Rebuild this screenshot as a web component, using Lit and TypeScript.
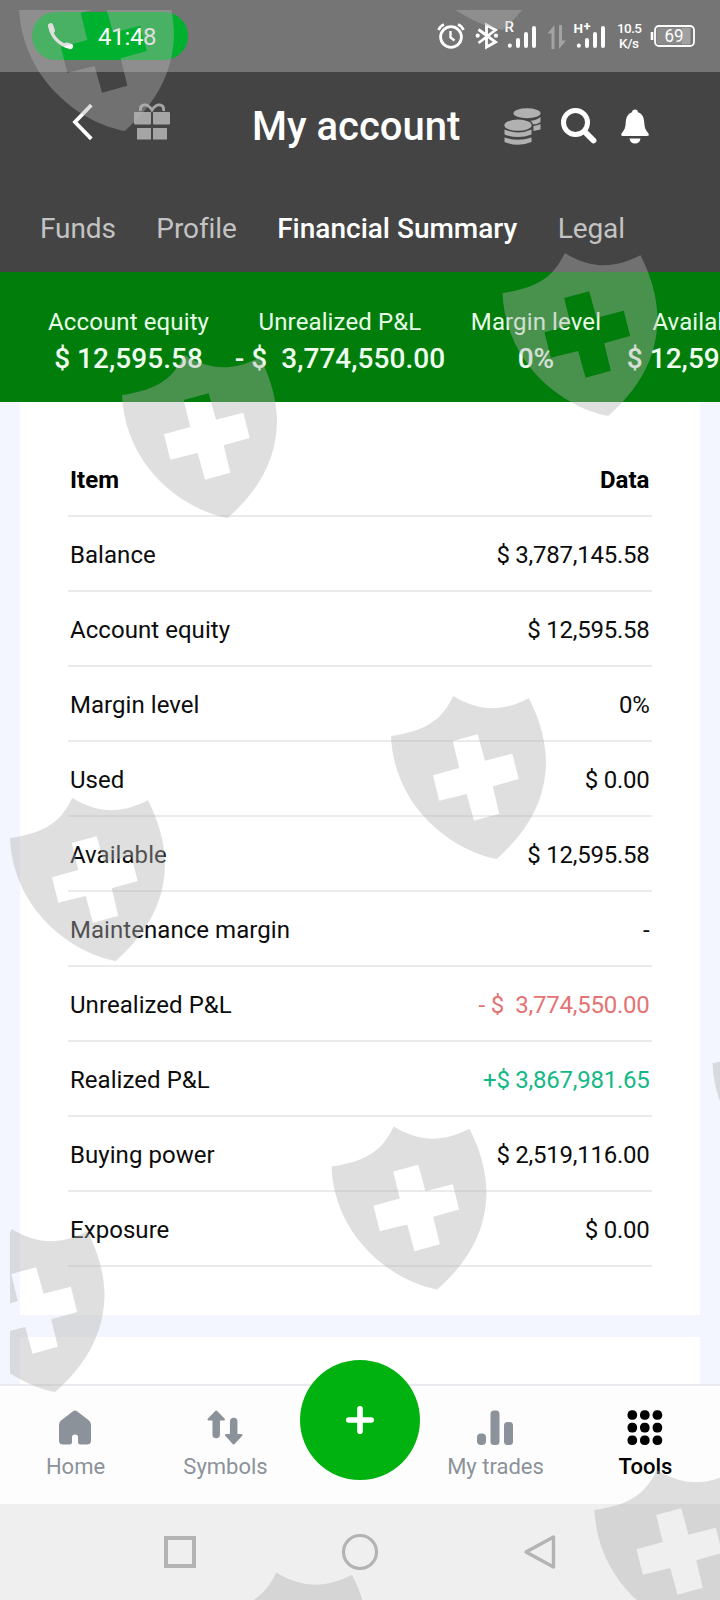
import { LitElement, html, css, svg } from 'lit';
import { customElement, property } from 'lit/decorators.js';
import { classMap } from 'lit/directives/class-map.js';

const TABS = ['Funds', 'Profile', 'Financial Summary', 'Legal'];

const STATS = [
  { label: 'Account equity', value: '$ 12,595.58' },
  { label: 'Unrealized P&L', value: '- $  3,774,550.00' },
  { label: 'Margin level', value: '0%' },
  { label: 'Available', value: '$ 12,595.58' },
];

const ROWS = [
  { item: 'Balance', data: '$ 3,787,145.58', tone: '' },
  { item: 'Account equity', data: '$ 12,595.58', tone: '' },
  { item: 'Margin level', data: '0%', tone: '' },
  { item: 'Used', data: '$ 0.00', tone: '' },
  { item: 'Available', data: '$ 12,595.58', tone: '' },
  { item: 'Maintenance margin', data: '-', tone: '' },
  { item: 'Unrealized P&L', data: '- $  3,774,550.00', tone: 'loss' },
  { item: 'Realized P&L', data: '+$ 3,867,981.65', tone: 'gain' },
  { item: 'Buying power', data: '$ 2,519,116.00', tone: '' },
  { item: 'Exposure', data: '$ 0.00', tone: '' },
];

// top left corner of every shield in the overlay
const SHIELDS = [
  [18, -33],
  [396, -134],
  [121, 354],
  [501.5, 252],
  [390, 695],
  [9, 797],
  [711.5, 1022],
  [330.5, 1125.5],
  [-51.5, 1228],
  [593.5, 1469],
  [213, 1571.5],
];

@customElement('status-bar')
class StatusBar extends LitElement {
  static styles = css`
    :host {
      display: flex;
      align-items: center;
      justify-content: space-between;
      height: 72px;
      padding: 0 24px 0 32px;
      box-sizing: border-box;
      background: #757575;
      color: #fff;
    }

    .call {
      display: flex;
      align-items: center;
      gap: 24px;
      width: 156px;
      height: 48px;
      padding-left: 15px;
      box-sizing: border-box;
      border-radius: 24px;
      background: #00b12f;
      font-size: 24px;
      letter-spacing: -0.3px;
    }

    .call span {
      padding-top: 2px;
    }

    svg {
      display: block;
    }
  `;

  render() {
    return html`
      <div class="call">
        <svg width="27" height="27" viewBox="0 0 27 27" fill="none" stroke="#fff" stroke-linecap="round">
          <path d="M3.5 4C4 13 13 23 23 23.5" stroke-width="3.4" />
          <path d="M3.6 2.8L5.2 7.6" stroke-width="5.4" />
          <path d="M19.4 22.2L23.4 23.4" stroke-width="5.4" />
        </svg>
        <span>41:48</span>
      </div>
      <svg width="260" height="40" viewBox="436 16 260 40" fill="none" stroke="#fff" font-family="Roboto, sans-serif">
        <circle cx="451" cy="37" r="10.4" stroke-width="2.8" />
        <path d="M450.5 31v6.5l4 3" stroke-width="2.4" />
        <path d="M438.5 30q1.5-4 5.5-5.5M463.5 30q-1.5-4-5.5-5.5" stroke-width="2.6" />
        <path d="M478.5 29.5l17 12.5-9 5v-22l9 5-17 13" stroke-width="2.8" />
        <circle cx="477.7" cy="35.7" r="2.1" fill="#fff" stroke="none" />
        <circle cx="496" cy="35.7" r="2.1" fill="#fff" stroke="none" />
        <g stroke-width="4" stroke-linecap="round">
          <path d="M509.8 45.5v.3M518 40v6M526 34v12M534 28v18" />
          <path d="M578.8 45.5v.3M587 40v6M595 34v12M603 28v18" />
        </g>
        <g fill="#a3a3a3" stroke="none">
          <path d="M547.5 33.5l7-8.5v24h-3V33.5z" />
          <path d="M559 25v24l7-8.5h-4V25z" />
        </g>
        <g fill="#fff" stroke="none" font-weight="500">
          <text x="504.5" y="32" font-size="15">R</text>
          <text x="573.5" y="33" font-size="13.5" font-weight="700">H</text>
          <text x="583.5" y="31" font-size="13" font-weight="700">+</text>
          <text x="617" y="33" font-size="13.5" textLength="25">10.5</text>
          <text x="619" y="48" font-size="13.5" textLength="20">K/s</text>
        </g>
        <rect x="655" y="26" width="39" height="20" rx="4" stroke-width="1.8" />
        <rect x="656.5" y="27.5" width="26" height="17" rx="2" fill="#8b8b8b" stroke="none" />
        <rect x="682" y="27.5" width="8.5" height="17" fill="#a0a0a0" stroke="none" />
        <path d="M652 32v8" stroke-width="2.6" />
        <text x="664.5" y="42" font-size="18" fill="#fff" stroke="none" textLength="19" lengthAdjust="spacingAndGlyphs">69</text>
      </svg>
    `;
  }
}

@customElement('app-header')
class AppHeader extends LitElement {
  static styles = css`
    :host {
      display: flex;
      flex-direction: column;
      height: 199.5px;
      background: #444;
      color: #fff;
    }

    .bar {
      display: flex;
      align-items: center;
      height: 108px;
      padding: 0 72px;
    }

    .left {
      display: flex;
      gap: 40px;
      width: 180px;
      padding-bottom: 8px;
    }

    .title {
      flex: 1;
      font-size: 40px;
      font-weight: 500;
      white-space: nowrap;
    }

    .right {
      display: flex;
      align-items: center;
      gap: 20px;
      width: 144px;
    }

    .tabs {
      display: flex;
      gap: 40.5px;
      padding: 32px 0 0 40px;
      font-size: 28px;
      line-height: 34px;
      letter-spacing: -0.1px;
      color: #c3c3c3;
      white-space: nowrap;
    }

    .active {
      color: #fff;
      font-weight: 500;
      letter-spacing: 0;
    }

    svg {
      display: block;
      flex: none;
    }
  `;

  render() {
    return html`
      <div class="bar">
        <div class="left">
          <svg width="21" height="38" viewBox="0 0 21 38" fill="none" stroke="#fff" stroke-width="3.8">
            <path d="M18 3.5L3 19l15 15.5" stroke-linecap="square" />
          </svg>
          <svg width="38" height="38" viewBox="0 0 38 38" fill="#a5a5a5">
            <rect x="1" y="9" width="17" height="12.5" rx="1" />
            <rect x="20" y="9" width="17" height="12.5" rx="1" />
            <rect x="4" y="25" width="14" height="11.5" />
            <rect x="20" y="25" width="14" height="11.5" />
            <path
              d="M7.5 8C6.5 1 14 -1 19 7C24 -1 31.5 1 30.5 8"
              fill="none"
              stroke="#a5a5a5"
              stroke-width="2.8"
            />
          </svg>
        </div>
        <div class="title">My account</div>
        <div class="right">
          <svg width="37" height="37" viewBox="0 0 37 37" fill="#b1b1b1">
            <ellipse cx="23" cy="5.3" rx="13.5" ry="5" />
            <path d="M36.5 9v5q-3 2.5-8.500 2.5l-2.500-3.5q7-.5 11-4z" />
            <path d="M36.5 16v5.5l-7 1.500v-5q4-.3 7-2z" />
            <ellipse cx="14" cy="17" rx="15" ry="7" fill="#444" />
            <ellipse cx="14" cy="17.2" rx="13.6" ry="5.6" />
            <path d="M.5 21.5q13.500 6 27 0v5q-13.500 5-27 0z" />
            <path d="M.5 29.5q13.500 4.500 27 0v4.500q-13.500 5.500-27 0z" />
          </svg>
          <svg width="36" height="36" viewBox="0 0 36 36" fill="none" stroke="#fff">
            <circle cx="14.5" cy="14.5" r="12" stroke-width="5" />
            <path d="M23.5 23.5l9 9" stroke-width="5.8" stroke-linecap="round" />
          </svg>
          <svg width="36" height="36" viewBox="0 0 36 36" fill="#fff">
            <path
              d="M18 1.5C19.8 1.5 20.8 2.5 21 4.3C26 6 27 10.5 27.3 15C27.5 19.5 28.5 22 31.5 25.5Q32.5 28 30 28H6Q3.5 28 4.5 25.5C7.5 22 8.5 19.5 8.7 15C9 10.5 10 6 15 4.3C15.2 2.5 16.2 1.5 18 1.5z"
            />
            <path d="M12.5 30.5h11q-.8 5-5.5 5t-5.500-5z" />
          </svg>
        </div>
      </div>
      <div class="tabs">
        ${TABS.map((t) => html`<span class=${classMap({ active: t === 'Financial Summary' })}>${t}</span>`)}
      </div>
    `;
  }
}

@customElement('stats-strip')
class StatsStrip extends LitElement {
  static styles = css`
    :host {
      display: flex;
      gap: 25.6px;
      height: 130.5px;
      padding: 36.5px 0 0 48px;
      box-sizing: border-box;
      overflow: hidden;
      background: #007d0a;
      color: #fff;
      text-align: center;
      white-space: pre;
    }

    .stat {
      flex: none;
    }

    .label {
      font-size: 24px;
      line-height: 28px;
      letter-spacing: 0.12px;
      color: #e8ffe8;
    }

    .value {
      font-size: 28px;
      line-height: 46px;
      font-weight: 500;
      letter-spacing: 0.04px;
      color: #efffef;
    }
  `;

  render() {
    return STATS.map(
      (s) => html`<div class="stat"><div class="label">${s.label}</div><div class="value">${s.value}</div></div>`
    );
  }
}

@customElement('summary-table')
class SummaryTable extends LitElement {
  static styles = css`
    :host {
      display: block;
      height: 912.5px;
      padding: 40px 48px 0;
      box-sizing: border-box;
      background: #fff;
      color: #0c0c0c;
      font-size: 24px;
    }

    .row {
      display: flex;
      justify-content: space-between;
      height: 75px;
      padding: 0 2.5px 0 2px;
      box-sizing: border-box;
      border-bottom: 2px solid #ebebeb;
      line-height: 77px;
      letter-spacing: 0.05px;
      white-space: pre;
    }

    .row:not(.head) span:last-child {
      letter-spacing: -0.25px;
    }

    .head {
      font-weight: 700;
      color: #000;
    }

    .loss {
      color: #e57373;
    }

    .gain {
      color: #14b887;
    }
  `;

  render() {
    return html`
      <div class="row head"><span>Item</span><span>Data</span></div>
      ${ROWS.map((r) => html`<div class="row"><span>${r.item}</span><span class=${r.tone}>${r.data}</span></div>`)}
    `;
  }
}

@customElement('nav-item')
class NavItem extends LitElement {
  static styles = css`
    :host {
      display: flex;
      flex-direction: column;
      align-items: center;
      gap: 9px;
      padding-top: 24px;
      font-size: 22px;
      line-height: 26px;
      color: #8b9299;
    }

    :host([active]) {
      color: #000;
      font-weight: 500;
    }

    span {
      padding-left: 1px;
    }
  `;

  @property() label = '';

  render() {
    return html`<slot></slot><span>${this.label}</span>`;
  }
}

@customElement('bottom-nav')
class BottomNav extends LitElement {
  static styles = css`
    :host {
      display: grid;
      grid-template-columns: 1fr 1fr 120px 1fr 1fr;
      height: 120px;
      box-sizing: border-box;
      border-top: 2px solid #e9ebee;
      background: #fdfdfd;
    }

    .fab {
      display: grid;
      place-items: center;
      width: 120px;
      height: 120px;
      margin-top: -26px;
      border-radius: 50%;
      background: #00b20f;
    }

    svg {
      display: block;
    }
  `;

  render() {
    return html`
      <nav-item label="Home">
        <svg width="36" height="35" viewBox="0 0 36 35" fill="#8b9299">
          <path
            d="M16 1.2Q18 -.2 20 1.2L32 10.5Q34 12 34 15V30.5Q34 34.5 30 34.5H23.5Q21 34.5 21 32V27Q21 24.5 18 24.5T15 27V32Q15 34.5 12.5 34.5H6Q2 34.5 2 30.5V15Q2 12 4 10.5z"
          />
        </svg>
      </nav-item>
      <nav-item label="Symbols">
        <svg width="36" height="35" viewBox="0 0 36 35" fill="#8b9299" stroke="#8b9299" stroke-linejoin="round">
          <path d="M9.2 1.5L1.5 9.5h15.5z" stroke-width="2" />
          <path d="M9.2 8v16.5M26.7 11.5V26" stroke-width="7.5" stroke-linecap="round" />
          <path d="M26.7 33.5L19 25h15.5z" stroke-width="2" />
        </svg>
      </nav-item>
      <div class="fab">
        <svg width="28" height="28" viewBox="0 0 28 28" stroke="#fff" stroke-width="5.6" stroke-linecap="round">
          <path d="M14 2.8v22.4M2.8 14h22.4" />
        </svg>
      </div>
      <nav-item label="My trades">
        <svg width="38" height="35" viewBox="0 0 38 35" fill="#8b9299">
          <rect x="1" y="23.5" width="9" height="11.5" rx="4" />
          <rect x="14.5" y="0.5" width="9" height="34.5" rx="3.5" />
          <rect x="28" y="12" width="9" height="23" rx="3.5" />
        </svg>
      </nav-item>
      <nav-item label="Tools" active>
        <svg width="36" height="35" viewBox="0 0 36 35" fill="#000">
          ${[0, 12.6, 25.2].map((y) =>
            [0.5, 13, 25.6].map((x) => svg`<rect x=${x} y=${y + 0.2} width="9.6" height="9.6" rx="4.3" />`)
          )}
        </svg>
      </nav-item>
    `;
  }
}

@customElement('shield-overlay')
class ShieldOverlay extends LitElement {
  static styles = css`
    :host {
      position: absolute;
      inset: 10px 0 0 10px;
      overflow: hidden;
      pointer-events: none;
    }

    svg {
      display: block;
    }
  `;

  render() {
    return html`
      <svg width="710" height="1590" viewBox="10 10 710 1590" fill="#b1b1b1" fill-opacity="0.412" fill-rule="evenodd">
        ${SHIELDS.map(
          ([x, y]) => svg`
            <path
              transform="translate(${x} ${y})"
              d="M1 41C40 35.5 53 22 63.3 1C90 17 112 17 139 3.3C150 25 156 47 156 68C155 107 137 137 106.7 164C63 156 4 113 1 41z
                M62.7 46L87.7 39.3L95 65.7L122.3 58.7L128.7 84L102.7 91.3L109.3 118.7L84 125.7L76.7 99L49.3 105.7L43 80.3L69.3 73z"
            />
          `
        )}
      </svg>
    `;
  }
}

@customElement('app-root')
class AppRoot extends LitElement {
  static styles = css`
    :host {
      position: relative;
      display: flex;
      flex-direction: column;
      width: 720px;
      height: 1600px;
      overflow: hidden;
      background: #f3f6fe;
      font-family: Roboto, 'Liberation Sans', sans-serif;
    }

    .content {
      display: flex;
      flex-direction: column;
      gap: 22px;
      height: 982px;
      padding: 0 20px;
      box-sizing: border-box;
      overflow: hidden;
    }

    .next {
      flex: 1;
      background: #fff;
    }

    .system {
      display: flex;
      align-items: center;
      justify-content: center;
      gap: 144px;
      height: 96px;
      background: #efefef;
    }
  `;

  render() {
    return html`
      <status-bar></status-bar>
      <app-header></app-header>
      <stats-strip></stats-strip>
      <div class="content">
        <summary-table></summary-table>
        <div class="next"></div>
      </div>
      <bottom-nav></bottom-nav>
      <div class="system">
        <svg width="36" height="36" viewBox="0 0 36 36" fill="none" stroke="#b3b3b3" stroke-width="4">
          <rect x="4" y="4" width="28" height="28" />
        </svg>
        <svg width="36" height="36" viewBox="0 0 36 36" fill="none" stroke="#b3b3b3" stroke-width="3.2" overflow="visible">
          <circle cx="18" cy="18" r="16.5" />
        </svg>
        <svg width="36" height="36" viewBox="0 0 36 36" fill="none" stroke="#b3b3b3" stroke-width="3.4">
          <path d="M31.5 3v30L4 18z" stroke-linejoin="round" />
        </svg>
      </div>
      <shield-overlay></shield-overlay>
    `;
  }
}
